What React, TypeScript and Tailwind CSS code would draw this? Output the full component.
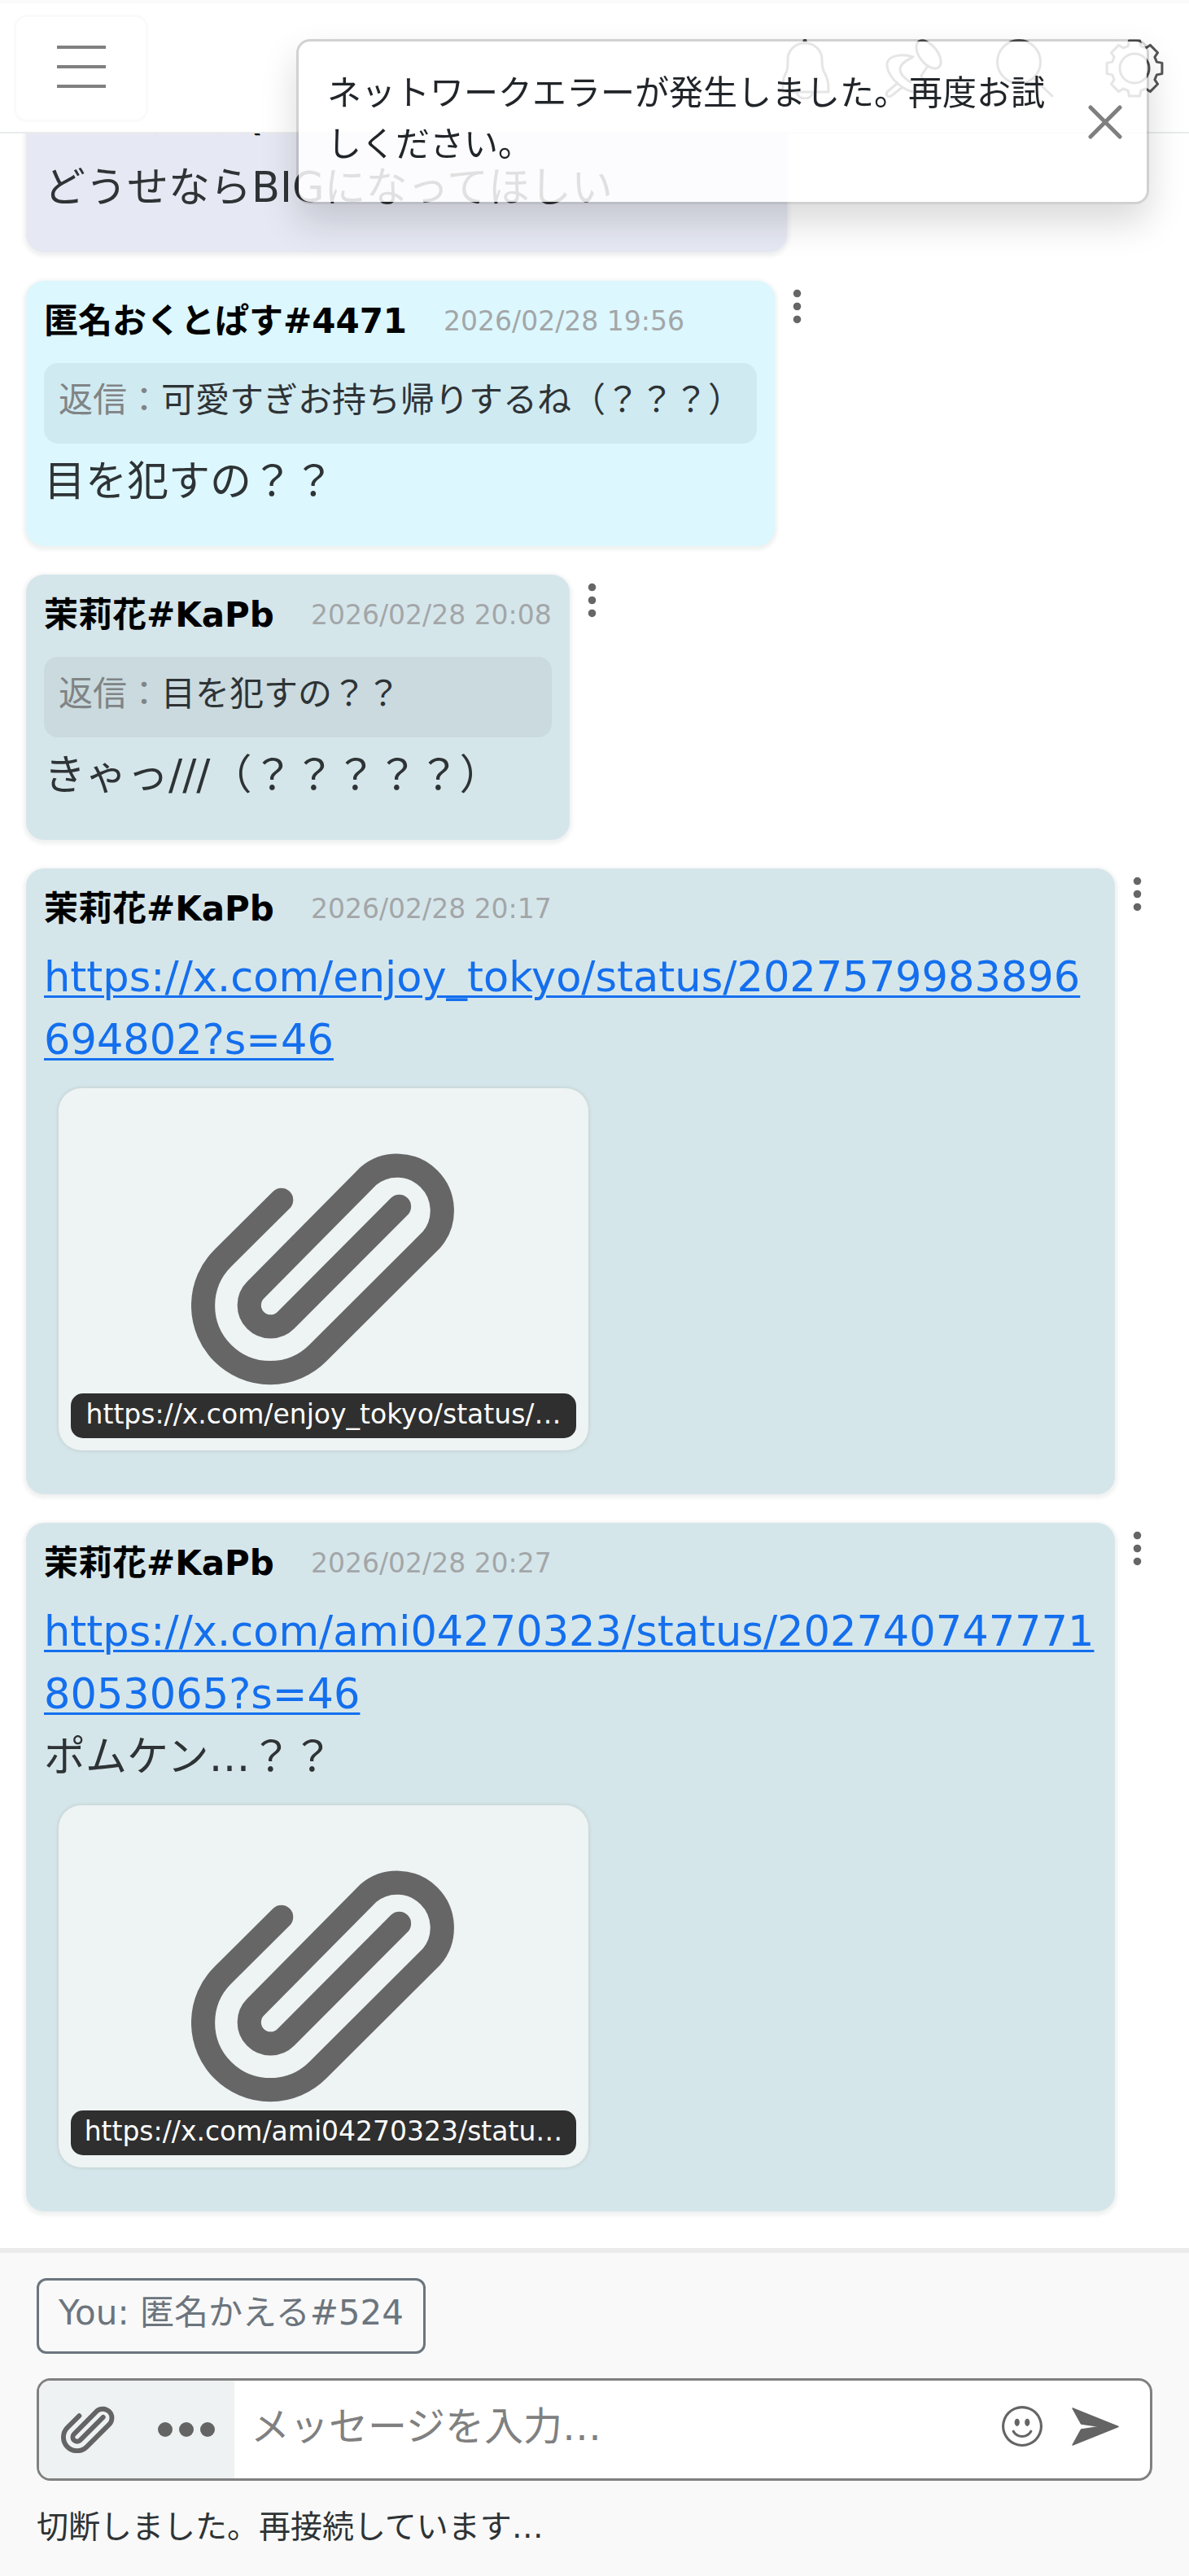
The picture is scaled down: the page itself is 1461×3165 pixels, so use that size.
import { useState } from "react";
import type { ReactNode } from "react";
import { BsEmojiSmile, BsThreeDotsVertical } from "react-icons/bs";
import clsx from "clsx";

type Message = {
  id: number;
  name: string;
  date: string;
  color: string;
  reply?: string;
  link?: string;
  text?: string;
  preview?: string;
};

const messages: Message[] = [
  {
    id: 1,
    name: "ハムスターズ(ひまわり)#12",
    date: "2026/02/28 19:51",
    color: "bg-[#e6e8f3]",
    text: "どうせならBIGになってほしい",
  },
  {
    id: 2,
    name: "匿名おくとぱす#4471",
    date: "2026/02/28 19:56",
    color: "bg-[#dcf7fe]",
    reply: "可愛すぎお持ち帰りするね（？？？）",
    text: "目を犯すの？？",
  },
  {
    id: 3,
    name: "茉莉花#KaPb",
    date: "2026/02/28 20:08",
    color: "bg-[#d5e6eb]",
    reply: "目を犯すの？？",
    text: "きゃっ///（？？？？？）",
  },
  {
    id: 4,
    name: "茉莉花#KaPb",
    date: "2026/02/28 20:17",
    color: "bg-[#d5e6eb]",
    link: "https://x.com/enjoy_tokyo/status/2027579983896694802?s=46",
    preview: "https://x.com/enjoy_tokyo/status/…",
  },
  {
    id: 5,
    name: "茉莉花#KaPb",
    date: "2026/02/28 20:27",
    color: "bg-[#d5e6eb]",
    link: "https://x.com/ami04270323/status/2027407477718053065?s=46",
    text: "ポムケン…？？",
    preview: "https://x.com/ami04270323/statu…",
  },
];

function PaperclipIcon({ className }: { className?: string }) {
  return (
    <svg viewBox="0 0 324 286" fill="none" className={className} aria-hidden="true">
      <path
        d="M110 60 38.5 131A82 82 0 1 0 154.5 247L293.5 108.5A55 55 0 0 0 216 31L78.5 170A26 26 0 0 0 115.4 207L254 68"
        stroke="currentColor"
        strokeWidth="29"
        strokeLinecap="round"
        strokeLinejoin="round"
      />
    </svg>
  );
}

function SendIcon({ className }: { className?: string }) {
  return (
    <svg viewBox="0 0 58 47" className={className} aria-hidden="true">
      <path
        d="M1 1 57 23.5 1 46 11.5 27 35 23.5 11.5 20Z"
        fill="currentColor"
        stroke="currentColor"
        strokeWidth="1.5"
        strokeLinejoin="round"
      />
    </svg>
  );
}

function gearPath() {
  const points: string[] = [];
  const steps = [
    [-11, 34.5],
    [11, 34.5],
    [16, 28.5],
    [29, 28.5],
  ];
  for (let tooth = 0; tooth < 8; tooth++) {
    for (const [offset, radius] of steps) {
      const angle = ((tooth * 45 + offset) * Math.PI) / 180;
      const x = 36 + radius * Math.cos(angle);
      const y = 36 + radius * Math.sin(angle);
      points.push(`${x.toFixed(1)} ${y.toFixed(1)}`);
    }
  }
  return `M${points.join("L")}Z`;
}

function HeaderIcon({ label, children }: { label: string; children: ReactNode }) {
  return (
    <button type="button" aria-label={label} className="w-[72px] text-[#555]">
      <svg
        viewBox="0 0 72 74"
        fill="none"
        stroke="currentColor"
        strokeWidth="3"
        strokeLinecap="round"
        strokeLinejoin="round"
        className="w-full"
      >
        {children}
      </svg>
    </button>
  );
}

function Header() {
  return (
    <header className="fixed inset-x-0 top-0 z-10 flex h-[164px] items-start justify-between border-t-4 border-b-2 border-t-[#fafafa] border-b-[#e9ecec] bg-white pt-[14px] pr-[31px] pl-[17px]">
      <button
        type="button"
        aria-label="メニュー"
        className="flex h-[132px] w-[165px] flex-col items-center justify-center gap-5 rounded-2xl border-3 border-[#fafafa] pb-1"
      >
        <span className="h-1 w-[60px] bg-[#808080]" />
        <span className="h-1 w-[60px] bg-[#808080]" />
        <span className="h-1 w-[60px] bg-[#808080]" />
      </button>
      <nav className="flex gap-[63px] pt-[30px]">
        <HeaderIcon label="通知">
          <circle cx="36" cy="2" r="1" fill="currentColor" />
          <path d="M36 5c-12 0-21 9-21 20 0 13-1 14-3 18-3 6-3 10-3 22h56c0-12-1-16-4-22-2-4-4-5-4-18C57 14 48 5 36 5ZM26 66c2 5 6 7 10 7s8-2 10-7" />
        </HeaderIcon>
        <HeaderIcon label="ピン留め">
          <ellipse cx="53" cy="19" rx="11" ry="20" transform="rotate(-38 53 19)" />
          <path d="M34 22c-12-4-30-3-32 8-1 12 13 30 32 35 12 3 16-8 10-20M34 22c-6 3-15 7-16 14-1 6 6 13 13 17M52 33 44 45M15 54 2 65c-2 4 1 7 5 5l14-11" />
        </HeaderIcon>
        <HeaderIcon label="検索">
          <circle cx="29" cy="28" r="26.5" />
          <path d="M47 48 70 70" />
        </HeaderIcon>
        <HeaderIcon label="設定">
          <circle cx="36" cy="36" r="18" />
          <path d={gearPath()} />
        </HeaderIcon>
      </nav>
    </header>
  );
}

function Toast({ onClose }: { onClose: () => void }) {
  return (
    <div
      role="alert"
      className="fixed top-12 right-[49px] z-20 flex w-[1048px] items-center justify-between rounded-[17px] border-3 border-black/18 bg-white/85 bg-clip-padding pt-8 pr-[30px] pb-[39px] pl-[35px] shadow-[0_22px_45px_rgba(0,0,0,0.15)]"
    >
      <p className="w-[885px] text-[42px] leading-[63px] text-[#212529]">
        ネットワークエラーが発生しました。再度お試しください。
      </p>
      <button type="button" aria-label="閉じる" onClick={onClose} className="pt-2 text-[#7f7f7f]">
        <svg viewBox="0 0 42 42" fill="none" className="size-[42px]">
          <path d="M3 3 39 39M39 3 3 39" stroke="currentColor" strokeWidth="5" strokeLinecap="round" />
        </svg>
      </button>
    </div>
  );
}

function MessageRow({ message }: { message: Message }) {
  const { name, date, color, reply, link, text, preview } = message;

  return (
    <li className="flex items-start pr-9 pl-8">
      <article
        className={clsx(
          "min-w-0 rounded-[22px] px-[22px] pt-[18px] shadow-[0_2px_4px_3px_rgba(40,60,60,0.07)]",
          preview ? "pb-[54px]" : "pb-[41px]",
          color
        )}
      >
        <div className="flex items-center gap-[45px] leading-[63px] whitespace-nowrap">
          <span className="text-[42px] font-bold text-black">{name}</span>
          <time className="text-[33px] text-[#a3a6a8]">{date}</time>
        </div>

        {reply && (
          <div className="mt-5 mb-2 rounded-[17px] bg-black/5 px-[18px] pt-[14px] pb-[22px] text-[42px] leading-[63px] text-[#2e3335]">
            <span className="text-[#808485]">返信：</span>
            {reply}
          </div>
        )}

        <div className={clsx("text-[51px] leading-[77px] text-[#2e3335]", !reply && "mt-[14px]")}>
          {link && (
            <a
              href={link}
              className="block break-all text-[#146fee] underline decoration-3 underline-offset-[5px]"
            >
              {link}
            </a>
          )}
          {text && <p>{text}</p>}
        </div>

        {preview && (
          <a
            href={link}
            className="mt-[21px] ml-[18px] flex h-[445px] w-[651px] flex-col items-center justify-end rounded-[28px] bg-[#eef3f3] px-[15px] pb-[15px] text-[#666] shadow-[0_0_3px_2px_rgba(120,120,90,0.12)]"
          >
            <PaperclipIcon className="mb-[10px] w-[326px]" />
            <span className="w-full rounded-[15px] bg-[#2f2f2f] pt-[1px] pb-[5px] text-center text-[33px] leading-[49px] whitespace-nowrap text-white">
              {preview}
            </span>
          </a>
        )}
      </article>
      <button
        type="button"
        aria-label="メッセージのメニュー"
        className="flex w-[55px] shrink-0 justify-center pt-[6px] text-[#666]"
      >
        <BsThreeDotsVertical className="size-[51px]" />
      </button>
    </li>
  );
}

function Composer() {
  const [value, setValue] = useState("");

  return (
    <footer className="border-t-6 border-[#ebebeb] bg-[#f9f9f9] px-[45px] pt-[31px] pb-[31px]">
      <button
        type="button"
        className="block rounded-[12px] border-3 border-[#6c757d] px-6 pt-2 pb-4 text-[42px] leading-[63px] text-[#6c757d]"
      >
        You: 匿名かえる#524
      </button>

      <form
        onSubmit={(e) => e.preventDefault()}
        className="mt-[30px] flex h-[126px] items-stretch overflow-hidden rounded-[17px] border-3 border-[#808080] bg-white text-[#646464]"
      >
        <div className="flex w-[240px] shrink-0 items-center justify-between bg-[#eef2f2] pr-6 pl-[27px]">
          <button type="button" aria-label="ファイルを添付">
            <PaperclipIcon className="w-[66px]" />
          </button>
          <button type="button" aria-label="その他" className="flex gap-2">
            <span className="size-[18px] rounded-full bg-current" />
            <span className="size-[18px] rounded-full bg-current" />
            <span className="size-[18px] rounded-full bg-current" />
          </button>
        </div>
        <input
          type="text"
          aria-label="メッセージ"
          value={value}
          onChange={(e) => setValue(e.target.value)}
          placeholder="メッセージを入力…"
          className="min-w-0 flex-1 bg-transparent px-5 pb-2 text-[48px] text-[#2e3335] outline-none placeholder:text-[#808080]"
        />
        <div className="flex shrink-0 items-center gap-9 pr-[38px] pb-2">
          <button type="button" aria-label="絵文字">
            <BsEmojiSmile className="size-[50px]" />
          </button>
          <button type="submit" aria-label="送信">
            <SendIcon className="w-[58px]" />
          </button>
        </div>
      </form>

      <p className="mt-[27px] text-[39px] leading-[59px] text-[#2e3335]">
        切断しました。再接続しています…
      </p>
    </footer>
  );
}

export default function App() {
  const [showToast, setShowToast] = useState(true);

  return (
    <div className="flex min-h-screen flex-col bg-white font-['DejaVu_Sans','Noto_Sans_CJK_JP',sans-serif]" lang="ja">
      <Header />
      {showToast && <Toast onClose={() => setShowToast(false)} />}
      <main className="flex-1 pt-[97px] pb-11">
        <ul className="flex flex-col gap-[35px]">
          {messages.map((message) => (
            <MessageRow key={message.id} message={message} />
          ))}
        </ul>
      </main>
      <Composer />
    </div>
  );
}
